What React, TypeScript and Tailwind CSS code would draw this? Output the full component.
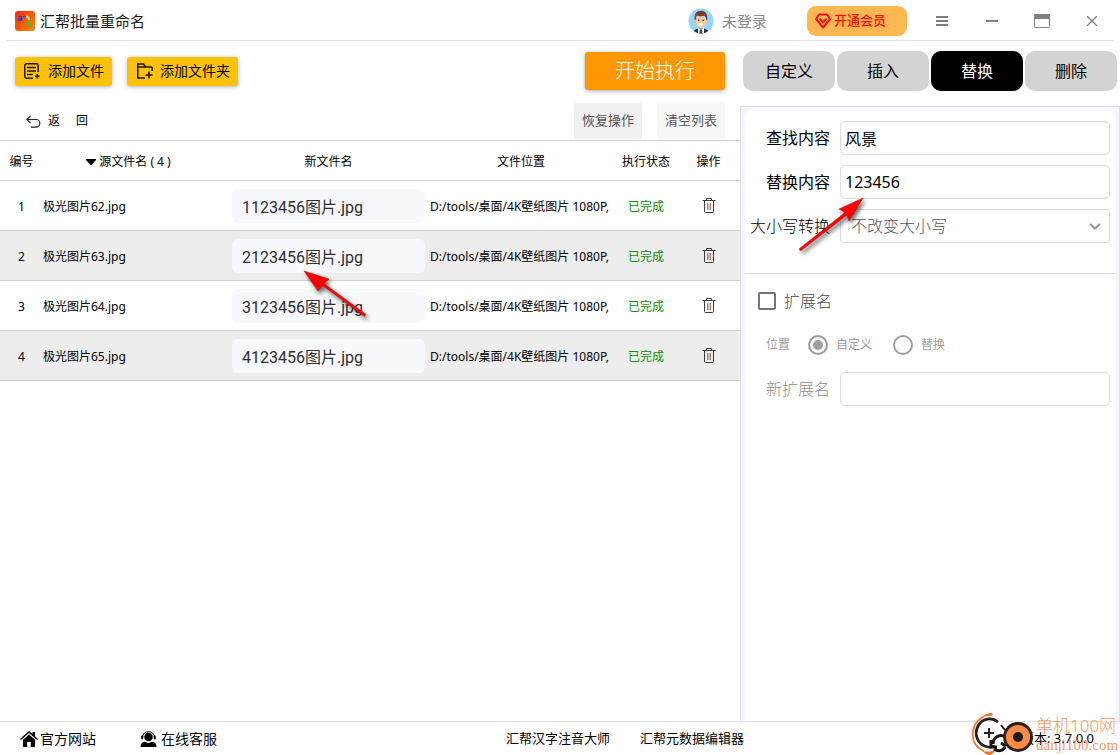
import { useState } from 'react'
import { clsx } from 'clsx'

const files = [
  { id: 1, source: '极光图片62.jpg', target: '1123456图片.jpg' },
  { id: 2, source: '极光图片63.jpg', target: '2123456图片.jpg' },
  { id: 3, source: '极光图片64.jpg', target: '3123456图片.jpg' },
  { id: 4, source: '极光图片65.jpg', target: '4123456图片.jpg' },
]

const tabs = ['自定义', '插入', '替换', '删除']

function LogoIcon() {
  return (
    <svg width="20" height="20" viewBox="0 0 20 20" aria-hidden="true">
      <defs>
        <linearGradient id="logo" x1="0" y1="0" x2="1" y2="1">
          <stop offset="0" stopColor="#ee2a10" />
          <stop offset="1" stopColor="#ff8a00" />
        </linearGradient>
      </defs>
      <rect width="20" height="20" rx="3" fill="url(#logo)" />
      <path d="M3.500 6c1-.9 3.200-.8 3.200.6v3M6.700 7.500C3 7.300 3 9.600 4.700 9.600c1 0 2-.6 2-1.300" fill="none" stroke="#2b3fe0" strokeWidth="1.300" />
      <path d="M8 5.500h2.500" stroke="#2b3fe0" strokeWidth="1.500" />
      <path d="M11 5.500c2 0 3 1 3 3.500" fill="none" stroke="#a8e08a" strokeWidth="2" />
      <path d="M11.500 11h3M12.500 16l2-4.500 2 4.500M13 14.500h3" fill="none" stroke="#35c23a" strokeWidth="1.300" />
    </svg>
  )
}

function AvatarIcon() {
  return (
    <svg width="26" height="26" viewBox="0 0 26 26" aria-hidden="true">
      <clipPath id="avatar">
        <circle cx="13" cy="13" r="12.500" />
      </clipPath>
      <circle cx="13" cy="13" r="12.500" fill="#8fd8fb" />
      <g clipPath="url(#avatar)">
        <path d="M5 26c0-3 2-5 5-5.500h6c3 .5 5 2.500 5 5.500z" fill="#16324f" />
        <path d="M10 20l3 1 3-1v6h-6z" fill="#fff" />
        <path d="M12 21.500h2l.6 4.500h-3.200z" fill="#24364a" />
        <circle cx="7.500" cy="13" r="1.400" fill="#f5b78f" />
        <circle cx="18.500" cy="13" r="1.400" fill="#f5b78f" />
        <path d="M8 9h10v5c0 3.500-2.500 6.500-5 6.500S8 17.500 8 14z" fill="#fbc9a2" />
        <path d="M6.800 12C6 6.500 8 3 12.500 2.800c5-.2 7.500 3.200 6.700 9.200l-1.200-.5c0-2-.5-3-1.500-3.800-3 .8-5.500.5-7.500-.2-.8 1-1 2.500-1 4z" fill="#7c3b2c" />
        <circle cx="10.800" cy="12.300" r=".8" fill="#4a2a20" />
        <circle cx="15.200" cy="12.300" r=".8" fill="#4a2a20" />
        <path d="M10.500 15.500h5c-.3 1.600-1.300 2.200-2.500 2.200s-2.200-.6-2.500-2.200z" fill="#fff" />
      </g>
    </svg>
  )
}

function VipIcon() {
  return (
    <svg width="16" height="16" viewBox="0 0 16 16" fill="none" stroke="#ff0f0f" strokeWidth="2" strokeLinejoin="round" strokeLinecap="round" aria-hidden="true">
      <path d="M4 1.500h8l3 4.500-7 8.500L1 6z" />
      <path d="M5.200 6.200L8 9.400l2.800-3.200" />
    </svg>
  )
}

function AddFileIcon() {
  return (
    <svg width="16" height="16" viewBox="0 0 16 16" fill="none" stroke="#1d1700" strokeWidth="1.500" aria-hidden="true">
      <path d="M14.200 9V2.500a1.700 1.700 0 0 0-1.700-1.700h-10A1.700 1.700 0 0 0 .8 2.500v11a1.700 1.700 0 0 0 1.700 1.700H9M3 4.500h9M3 8h9M3 11.500h6M13.200 11v4.500M11 13.200h4.500" />
    </svg>
  )
}

function AddFolderIcon() {
  return (
    <svg width="18" height="16" viewBox="0 0 18 16" fill="none" stroke="#1d1700" strokeWidth="1.600" aria-hidden="true">
      <path d="M16.200 8V5.500A1.500 1.500 0 0 0 14.700 4H9.500L7.500 1H1.800v14H9M2 4h7.500M13 8.500v7M9.500 12h7" />
    </svg>
  )
}

function TrashIcon() {
  return (
    <svg width="14" height="15" viewBox="0 0 14 15" fill="none" stroke="#3c3c3c" aria-hidden="true">
      <path d="M.5 2.500h13M4.500 2.500v-2h5v2M2.500 2.500v11a1 1 0 0 0 1 1h7a1 1 0 0 0 1-1v-11" />
      <path d="M5.500 5v7M8.500 5v7" stroke="#c27a55" />
      <path d="M7 5v7" stroke="#8a93a8" />
    </svg>
  )
}

function HomeIcon() {
  return (
    <svg width="18" height="16" viewBox="0 0 18 16" aria-hidden="true">
      <path d="M9 0l3.500 3V1H15v4.200L18 8l-.9 1L9 2 .9 9 0 8z" />
      <path d="M9 3.600l6 5.200V16h-4.200v-5H7.200v5H3V8.800z" />
    </svg>
  )
}

function ServiceIcon() {
  return (
    <svg width="17" height="16" viewBox="0 0 17 16" aria-hidden="true">
      <circle cx="8.500" cy="6" r="4.300" />
      <path d="M2.500 6.500C2.500-1.300 14.500-1.300 14.500 6.500" fill="none" stroke="#000" />
      <rect x="1.200" y="4.500" width="2" height="4" rx="1" />
      <rect x="13.800" y="4.500" width="2" height="4" rx="1" />
      <path d="M.5 16c0-3.200 1.500-5 4.500-5.200 2 1.500 5 1.500 7 0 3 .2 4.500 2 4.500 5.200z" />
    </svg>
  )
}

function WatermarkLogo() {
  return (
    <svg width="64" height="42" viewBox="0 0 64 42" fill="none" aria-hidden="true">
      <path d="M12 4C-2 12-2 32 13 38" stroke="#f5732a" strokeWidth="1.800" />
      <path d="M9 6c3-4 7-6 11-6 2 0 2 2 1 3-4-1-8 0-12 3zM10 37c4 2 8 2 14 0-1 3-3 5-6 5s-5-3-8-5z" fill="#f5732a" />
      <path d="M27 9C21 4 11 5 7 13c-4.500 9 0 18 8 20.500 3 1 6 .8 9-.5" stroke="#2b1f1c" strokeWidth="2.800" />
      <path d="M18 15v10M13 20h10M30 12l4 5M39 12l-4 6" stroke="#2b1f1c" strokeWidth="2" />
      <path d="M22 31c0-8 8-10 13-7M20 27v7h6M34 34c-2 4-7 5-11 2M30 30l5 3" stroke="#151515" strokeWidth="3" />
      <circle cx="47" cy="24" r="13.500" fill="#fb8b43" stroke="#2b1f1c" strokeWidth="2.800" />
      <circle cx="47" cy="24" r="5" fill="#1f1a1a" />
    </svg>
  )
}

function TitleBar() {
  return (
    <header className="mx-1.5 flex h-[41px] items-center border-b border-[#e2e2e2] pt-0.5 pl-[9px]">
      <LogoIcon />
      <h1 className="ml-[5px] text-[15px] text-[#1a1a1a]">汇帮批量重命名</h1>
      <button className="ml-auto flex items-center gap-2 text-[15px] text-[#8a8a8a]">
        <AvatarIcon />
        未登录
      </button>
      <button className="ml-10 flex h-[30px] w-[100px] items-center gap-[3px] rounded-[9px] bg-[#ffb752] pl-2 text-[13px] font-medium text-[#ff0f0f]">
        <VipIcon />
        开通会员
      </button>
      <div className="-mr-[3px] ml-2.5 flex">
        <button aria-label="菜单" className="flex h-9 w-[50px] items-center justify-center">
          <svg width="12" height="10" viewBox="0 0 12 10" fill="none" stroke="#7d7d7d" strokeWidth="2">
            <path d="M0 1h12M0 5h12M0 9h12" />
          </svg>
        </button>
        <button aria-label="最小化" className="flex h-9 w-[50px] items-center justify-center">
          <svg width="12" height="2" viewBox="0 0 12 2">
            <rect width="12" height="2" fill="#808080" />
          </svg>
        </button>
        <button aria-label="最大化" className="flex h-9 w-[50px] items-center justify-center">
          <svg width="16" height="14" viewBox="0 0 16 14">
            <rect x=".5" y=".5" width="15" height="13" rx="1" fill="#fff" stroke="#808080" />
            <rect width="16" height="5" rx="1" fill="#808080" />
          </svg>
        </button>
        <button aria-label="关闭" className="flex h-9 w-[50px] items-center justify-center">
          <svg width="10" height="10" viewBox="0 0 10 10" fill="none" stroke="#7d7d7d" strokeWidth="1.300">
            <path d="M0 0l10 10M10 0L0 10" />
          </svg>
        </button>
      </div>
    </header>
  )
}

function FileTable() {
  return (
    <div className="relative">
      <table className="w-full table-fixed border-separate border-spacing-0 text-xs">
        <colgroup>
          <col className="w-[43px]" />
          <col className="w-[187px]" />
          <col className="w-[197px]" />
          <col />
          <col className="w-[62px]" />
          <col className="w-[63px]" />
        </colgroup>
        <thead>
          <tr className="h-10 *:border-b *:border-[#cfcfcf] *:pt-0.5 *:font-normal">
            <th>编号</th>
            <th>
              <span className="flex items-center justify-center gap-[3px] pr-4">
                <svg width="10" height="6" viewBox="0 0 10 6" aria-hidden="true">
                  <path d="M0 0h10v1L5.500 6h-1L0 1z" />
                </svg>
                源文件名 ( 4 )
              </span>
            </th>
            <th>新文件名</th>
            <th>文件位置</th>
            <th>执行状态</th>
            <th>操作</th>
          </tr>
        </thead>
        <tbody>
          {files.map((file) => (
            <tr key={file.id} className="h-[50px] even:bg-[#ededed] *:border-b *:border-[#cfcfcf]">
              <td className="pt-0.5 text-center">{file.id}</td>
              <td className="pt-0.5">{file.source}</td>
              <td className="px-0.5">
                <input
                  aria-label={`新文件名 ${file.id}`}
                  defaultValue={file.target}
                  className="block h-[34px] w-full rounded-md bg-[#f7f8fc] px-2.5 font-[Roboto,'Noto_Sans_CJK_SC',sans-serif] text-base text-[#2e2e33]"
                />
              </td>
              <td className="pt-0.5 pl-[3px] whitespace-nowrap">D:/tools/桌面/4K壁纸图片 1080P,</td>
              <td className="pt-0.5 text-center text-[#0a8f0a]">已完成</td>
              <td>
                <button aria-label={`删除 ${file.source}`} className="mx-auto block">
                  <TrashIcon />
                </button>
              </td>
            </tr>
          ))}
        </tbody>
      </table>
      <svg className="pointer-events-none absolute top-[125px] left-[300px] drop-shadow-[2px_3px_2px_rgba(0,0,0,0.6)]" width="70" height="60" viewBox="0 0 70 60" aria-hidden="true">
        <path d="M4 5l25 8-5 4.500 42 31-1.500 2-42-31L18 25z" fill="#f00" stroke="#b01010" strokeWidth=".5" />
      </svg>
    </div>
  )
}

function ReplacePanel() {
  return (
    <div className="flex flex-1 flex-col border border-b-0 border-[#dcdfe6] bg-[#f5f7fa] px-1 pt-1">
      <form className="relative flex-1 rounded-t-md bg-white pt-2.5 text-base">
        <div className="flex flex-col gap-2.5 border-b border-[#dcdfe6] pr-[5px] pb-[30px]">
          <div className="flex items-center gap-2.5">
            <label htmlFor="find" className="w-[85px] text-right">查找内容</label>
            <input id="find" defaultValue="风景" className="h-[34px] min-w-0 flex-1 rounded-[5px] border border-[#dcdcdf] px-1" />
          </div>
          <div className="flex items-center gap-2.5">
            <label htmlFor="replace" className="w-[85px] text-right">替换内容</label>
            <input id="replace" defaultValue="123456" className="h-[34px] min-w-0 flex-1 rounded-[5px] border border-[#dcdcdf] px-1" />
          </div>
          <div className="flex items-center gap-2.5">
            <label htmlFor="case" className="w-[85px] text-right font-light">大小写转换</label>
            <div className="relative flex-1">
              <select id="case" className="block h-[34px] w-full appearance-none rounded-[3px] border border-[#dcdcdf] px-2.5 font-light text-[#4f5566]">
                <option>不改变大小写</option>
              </select>
              <svg className="pointer-events-none absolute top-3.5 right-[9px]" width="12" height="7" viewBox="0 0 12 7" fill="none" stroke="#909399" strokeWidth="2" aria-hidden="true">
                <path d="M1 1l5 4.500L11 1" />
              </svg>
            </div>
          </div>
        </div>

        <label className="mt-[18px] ml-[13px] flex w-fit items-center gap-2 text-[#4a4a4a]">
          <input type="checkbox" className="size-[18px] appearance-none rounded-[2px] border-2 border-[#757575] bg-white checked:bg-[#757575]" />
          <span className="leading-[18px] font-light">扩展名</span>
        </label>

        <fieldset disabled className="mt-[25px] flex h-5 items-center pl-[21px] text-xs text-[#9e9e9e]">
          <span className="mr-[18px]">位置</span>
          <label className="mr-[21px] flex items-center gap-2">
            <input type="radio" name="position" defaultChecked className="size-5 appearance-none rounded-full border-2 border-[#9e9e9e] bg-white checked:bg-[#9e9e9e] checked:shadow-[inset_0_0_0_3px_white]" />
            自定义
          </label>
          <label className="flex items-center gap-2">
            <input type="radio" name="position" className="size-5 appearance-none rounded-full border-2 border-[#9e9e9e] bg-white checked:bg-[#9e9e9e] checked:shadow-[inset_0_0_0_3px_white]" />
            替换
          </label>
        </fieldset>

        <div className="mt-[17px] flex items-center gap-2.5 pr-[5px] text-[#8e8e8e]">
          <label htmlFor="extension" className="w-[85px] text-right font-light">新扩展名</label>
          <input id="extension" disabled className="h-[34px] min-w-0 flex-1 rounded-[5px] border border-[#dcdcdf] bg-white px-1" />
        </div>

        <svg className="pointer-events-none absolute top-[82px] left-[49px] drop-shadow-[2px_3px_2px_rgba(0,0,0,0.6)]" width="76" height="64" viewBox="0 0 76 64" aria-hidden="true">
          <path d="M69 5L45 16l6 3.500L5 56l1.500 2 46.500-36 2 6z" fill="#f00" stroke="#b01010" strokeWidth=".5" />
        </svg>
      </form>
    </div>
  )
}

export default function App() {
  const [activeTab, setActiveTab] = useState('替换')

  return (
    <div className="relative flex min-h-screen flex-col bg-white font-['Noto_Sans','Noto_Sans_CJK_SC',sans-serif] text-black">
      <TitleBar />

      <main className="flex flex-1">
        <section className="min-w-0 flex-1">
          <div className="flex h-[62px] items-center px-[15px] pb-0.5">
            <button className="flex h-[29px] items-center gap-2 rounded-[3px] bg-[#ffc107] pr-2 pl-[9px] text-sm shadow-[0_1px_4px_rgba(0,0,0,0.3)]">
              <AddFileIcon />
              添加文件
            </button>
            <button className="ml-[15px] flex h-[29px] items-center gap-1.5 rounded-[3px] bg-[#ffc107] pr-2 pl-[9px] text-sm shadow-[0_1px_4px_rgba(0,0,0,0.3)]">
              <AddFolderIcon />
              添加文件夹
            </button>
            <button className="ml-auto h-[38px] w-[140px] rounded-[3px] bg-[#ff9800] text-xl font-light text-white shadow-[0_1px_4px_rgba(0,0,0,0.35)]">
              开始执行
            </button>
          </div>

          <div className="flex items-start border-b border-[#cfcfcf] pr-[15px] pb-px pl-[26px]">
            <button className="flex h-9 items-center gap-[7px] text-xs">
              <svg width="15" height="13" viewBox="0 0 15 13" fill="none" stroke="#222" strokeWidth="1.200" aria-hidden="true">
                <path d="M4.500.8L.8 4.500l3.700 3.700M1 4.500h9a3.800 3.800 0 0 1 0 7.700H5" />
              </svg>
              <span className="flex gap-4">
                <span>返</span>
                <span>回</span>
              </span>
            </button>
            <button className="ml-auto h-9 w-[68px] rounded-[2px] bg-[#f0f0f0] text-[13px] text-[#555]">恢复操作</button>
            <button className="ml-[15px] h-9 w-[68px] rounded-[2px] bg-[#f7f7f7] text-[13px] text-[#555]">清空列表</button>
          </div>

          <FileTable />
        </section>

        <aside className="flex w-[380px] shrink-0 flex-col">
          <div className="grid grid-cols-4 gap-0.5 px-[3px] pt-2.5 pb-[15px]">
            {tabs.map((tab) => (
              <button
                key={tab}
                onClick={() => setActiveTab(tab)}
                className={clsx(
                  'h-10 rounded-[10px] text-base',
                  activeTab === tab ? 'bg-black text-white' : 'bg-[#d3d3d3] text-black',
                )}
              >
                {tab}
              </button>
            ))}
          </div>
          <ReplacePanel />
        </aside>
      </main>

      <footer className="flex h-[34px] items-center border-t border-[#e2e2e2] pr-[26px] pl-5 text-sm">
        <a href="#site" className="flex items-center gap-0.5">
          <HomeIcon />
          官方网站
        </a>
        <a href="#service" className="ml-11 flex items-center gap-1">
          <ServiceIcon />
          在线客服
        </a>
        <a href="#pinyin" className="ml-auto text-[13px]">汇帮汉字注音大师</a>
        <a href="#metadata" className="ml-[30px] text-[13px]">汇帮元数据编辑器</a>
        <span className="ml-[277px] text-[13px] whitespace-nowrap">版本: 3.7.0.0</span>
      </footer>

      <div className="pointer-events-none absolute right-[3px] bottom-0 flex items-center gap-px text-[#f5732a]/75">
        <WatermarkLogo />
        <div className="flex w-[81px] flex-col whitespace-nowrap">
          <span className="text-[17px] leading-[22px] font-light">单机100网</span>
          <span className="font-['Liberation_Serif',serif] text-[15px] leading-4">danji100.com</span>
        </div>
      </div>
    </div>
  )
}
